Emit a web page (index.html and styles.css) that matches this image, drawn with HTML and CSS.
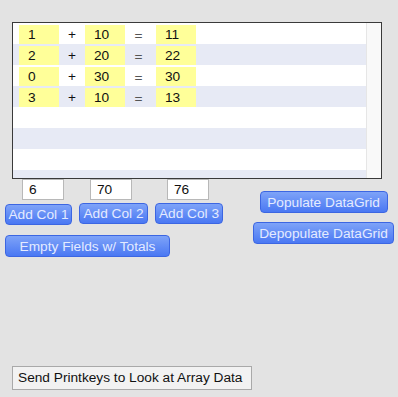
FILE: index.html
```html
<!DOCTYPE html>
<html>
<head>
<meta charset="utf-8">
<link rel="stylesheet" href="styles.css">
</head>
<body>
<div class="grid">
  <div class="rows">
    <div class="row"><span class="cell">1</span><span class="op">+</span><span class="cell">10</span><span class="op eq">=</span><span class="cell">11</span></div>
    <div class="row alt"><span class="cell">2</span><span class="op">+</span><span class="cell">20</span><span class="op eq">=</span><span class="cell">22</span></div>
    <div class="row"><span class="cell">0</span><span class="op">+</span><span class="cell">30</span><span class="op eq">=</span><span class="cell">30</span></div>
    <div class="row alt"><span class="cell">3</span><span class="op">+</span><span class="cell">10</span><span class="op eq">=</span><span class="cell">13</span></div>
    <div class="row"></div>
    <div class="row alt"></div>
    <div class="row"></div>
    <div class="row alt"></div>
  </div>
  <div class="scroll"></div>
</div>
<div class="controls">
  <div class="left">
    <div class="fields">
      <div class="field f1">6</div>
      <div class="field f2">70</div>
      <div class="field f3">76</div>
    </div>
    <div class="adds">
      <button class="btn a1">Add Col 1</button>
      <button class="btn a2">Add Col 2</button>
      <button class="btn a3">Add Col 3</button>
    </div>
    <button class="btn empty">Empty Fields w/ Totals</button>
  </div>
  <div class="right">
    <button class="btn pop">Populate DataGrid</button>
    <button class="btn depop">Depopulate DataGrid</button>
  </div>
</div>
<div class="print">Send Printkeys to Look at Array Data</div>
</body>
</html>
```
FILE: styles.css
```css
html, body {
  margin: 0;
  padding: 0;
  background: #e3e3e3;
  font-family: "Liberation Sans", Arial, sans-serif;
  font-size: 13.7px;
  color: #111;
}
body {
  width: 398px;
  height: 397px;
  overflow: hidden;
  padding-top: 22px;
  box-sizing: border-box;
}
.grid {
  margin-left: 12px;
  width: 370px;
  height: 157px;
  box-sizing: border-box;
  border: 1px solid #3a3a3a;
  display: flex;
  overflow: hidden;
  background: #fff;
}
.rows {
  flex: 1;
  overflow: hidden;
}
.scroll {
  width: 14px;
  background: #f9f9f9;
  border-left: 1px solid #e6e6e6;
}
.row {
  height: 21px;
  background: #fff;
  display: flex;
  align-items: flex-end;
  padding-left: 6px;
  box-sizing: border-box;
}
.row.alt {
  background: #e7eaf5;
}
.cell {
  width: 40px;
  height: 19px;
  line-height: 19px;
  background: #ffff99;
  padding-left: 9px;
  box-sizing: border-box;
}
.op {
  width: 26px;
  text-align: center;
  line-height: 19px;
  height: 19px;
}
.op.eq {
  width: 31px;
  padding-right: 4px;
  padding-top: 2px;
  box-sizing: border-box;
  line-height: 17px;
  color: #555;
}
.controls {
  display: flex;
}
.left {
  width: 240px;
}
.fields {
  display: flex;
  height: 21px;
}
.field {
  width: 42px;
  height: 21px;
  box-sizing: border-box;
  background: #fff;
  border: 1px solid #b8b8b8;
  padding-left: 6px;
  line-height: 19px;
}
.f1 { margin-left: 22px; }
.f2 { margin-left: 26px; }
.f3 { margin-left: 35px; }
.btn {
  display: block;
  font-family: "Liberation Sans", Arial, sans-serif;
  font-size: 13.7px;
  color: #e4ebff;
  background: linear-gradient(#7ea3f8, #4a78f3);
  border: 1px solid #3c66e2;
  border-radius: 4px;
  padding: 0;
  margin: 0;
  height: 21px;
  line-height: 19px;
  text-align: center;
  box-sizing: border-box;
}
.adds {
  display: flex;
  align-items: flex-start;
  margin-top: 3px;
  padding-left: 5px;
  gap: 7px;
}
.a1 { width: 67px; margin-top: 1px; }
.a2 { width: 69px; }
.a3 { width: 68px; }
.empty {
  width: 165px;
  height: 22px;
  margin: 10px 0 0 5px;
}
.right {
  display: flex;
  flex-direction: column;
  align-items: center;
  width: 141px;
  margin-left: 13px;
}
.pop {
  width: 128px;
  height: 22px;
  margin-top: 12px;
}
.depop {
  width: 141px;
  height: 22px;
  margin-top: 9px;
}
.print {
  margin: 109px 0 0 12px;
  width: 240px;
  height: 24px;
  box-sizing: border-box;
  background: #f2f2f2;
  border: 1px solid #a9a9a9;
  padding-left: 5px;
  line-height: 22px;
  color: #111;
}
```
